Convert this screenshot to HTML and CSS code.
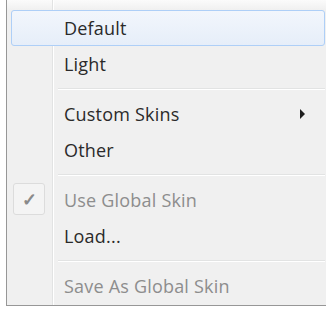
FILE: index.html
```html
<!DOCTYPE html>
<html>
<head>
<meta charset="utf-8">
<link rel="stylesheet" href="styles.css">
</head>
<body>
<div class="menu">
  <div class="gutter-line"></div>
  <div class="item hot"><span class="label">Default</span></div>
  <div class="item"><span class="label">Light</span></div>
  <div class="sep"></div>
  <div class="item"><span class="label">Custom Skins</span><span class="arrow"></span></div>
  <div class="item"><span class="label">Other</span></div>
  <div class="sep"></div>
  <div class="item disabled"><span class="check">&#x2713;</span><span class="label">Use Global Skin</span></div>
  <div class="item"><span class="label">Load...</span></div>
  <div class="sep"></div>
  <div class="item disabled"><span class="label">Save As Global Skin</span></div>
</div>
</body>
</html>
```

FILE: styles.css
```css
html, body {
  margin: 0;
  padding: 0;
  background: #ffffff;
}
body {
  font-family: "Open Sans", "Noto Sans", sans-serif;
  font-size: 18px;
}
.menu {
  position: relative;
  margin-left: 6px;
  width: 314px;
  padding: 10px 3px 1px 4px;
  background: #f0f0f0;
  border-left: 1px solid #979797;
  border-right: 1px solid #979797;
  border-bottom: 1px solid #979797;
  background-image: linear-gradient(#fbfbfb, #f0f0f0 10px);
}
.gutter-line {
  position: absolute;
  left: 45px;
  top: 0;
  bottom: 0;
  width: 1px;
  background: #e2e3e3;
  box-shadow: 1px 0 0 #ffffff;
}
.item {
  position: relative;
  height: 36px;
  display: flex;
  align-items: center;
  box-sizing: border-box;
  color: #2a2a2a;
  font-weight: 500;
}
.item.hot {
  border: 1px solid #aecff7;
  border-radius: 3px;
  background: linear-gradient(#f2f6fc, #e6eef9);
}
.label {
  margin-left: 53px;
  letter-spacing: 0.2px;
}
.item.hot .label {
  margin-left: 52px;
}
.item.disabled {
  color: #8d8d8d;
}
.check {
  position: absolute;
  left: 2px;
  top: 1px;
  width: 32px;
  height: 32px;
  box-sizing: border-box;
  border: 1px solid #dcdcdc;
  border-radius: 3px;
  background: #f4f4f4;
  display: flex;
  align-items: center;
  justify-content: center;
  color: #8a8a8a;
  font-size: 18px;
  font-weight: 700;
  letter-spacing: 0;
}
.arrow {
  margin-left: auto;
  margin-right: 20px;
  width: 0;
  height: 0;
  border-top: 5px solid transparent;
  border-bottom: 5px solid transparent;
  border-left: 5px solid #1e1e1e;
}
.sep {
  height: 14px;
  margin-left: 47px;
  position: relative;
}
.sep::after {
  content: "";
  position: absolute;
  left: 0;
  right: 0;
  top: 6px;
  height: 1px;
  background: #e2e3e3;
  box-shadow: 0 1px 0 #ffffff;
}
```
